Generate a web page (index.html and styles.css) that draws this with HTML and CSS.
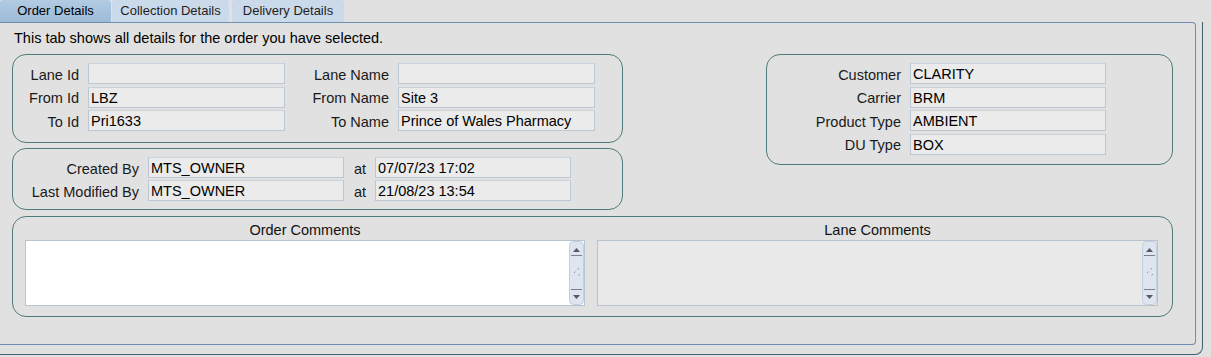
FILE: index.html
```html
<!DOCTYPE html>
<html lang="en">
<head>
	<meta charset="UTF-8">
	<title>Order Details</title>
	<link rel="stylesheet" href="styles.css">
</head>
<body>

	<div class="tabs">
		<div class="tab active">Order Details</div>
		<div class="tab">Collection Details</div>
		<div class="tab">Delivery Details</div>
	</div>

	<div class="frame">
		<div class="panel">
			<p class="intro">This tab shows all details for the order you have selected.</p>

			<div class="top-row">
				<div class="left-col">
					<div class="group lane-box">
						<label>Lane Id</label><div class="field"></div>
						<label>Lane Name</label><div class="field"></div>
						<label>From Id</label><div class="field">LBZ</div>
						<label>From Name</label><div class="field">Site 3</div>
						<label>To Id</label><div class="field">Pri1633</div>
						<label>To Name</label><div class="field">Prince of Wales Pharmacy</div>
					</div>

					<div class="group audit-box">
						<label>Created By</label><div class="field">MTS_OWNER</div>
						<label>at</label><div class="field">07/07/23 17:02</div>
						<label>Last Modified By</label><div class="field">MTS_OWNER</div>
						<label>at</label><div class="field">21/08/23 13:54</div>
					</div>
				</div>

				<div class="group info-box">
					<label>Customer</label><div class="field">CLARITY</div>
					<label>Carrier</label><div class="field">BRM</div>
					<label>Product Type</label><div class="field">AMBIENT</div>
					<label>DU Type</label><div class="field">BOX</div>
				</div>
			</div>

			<div class="group comments-box">
				<div class="comment">
					<div class="comment-title">Order Comments</div>
					<div class="memo editable">
						<div class="memo-text"></div>
						<svg class="scroll" width="15" height="64" viewBox="0 0 15 64">
							<rect x="0.5" y="0.5" width="14" height="63" rx="4" fill="#dde5ef" stroke="#c3cfdc"/>
							<path d="M4 11 L7.5 7 L11 11 Z" fill="#555a66"/>
							<line x1="2" y1="14.5" x2="13" y2="14.5" stroke="#7a808c"/>
							<line x1="2" y1="48.5" x2="13" y2="48.5" stroke="#7a808c"/>
							<path d="M4 54 L7.5 58 L11 54 Z" fill="#555a66"/>
							<rect x="9" y="27" width="1" height="1" fill="#8a93a3"/>
							<rect x="8" y="28" width="1" height="1" fill="#b8c0cc"/>
							<rect x="6" y="30" width="1" height="1" fill="#b8c0cc"/>
							<rect x="5" y="31" width="1" height="1" fill="#8a93a3"/>
							<rect x="10" y="33" width="1" height="1" fill="#8a93a3"/>
							<rect x="9" y="34" width="1" height="1" fill="#b8c0cc"/>
						</svg>
					</div>
				</div>
				<div class="comment">
					<div class="comment-title">Lane Comments</div>
					<div class="memo readonly">
						<div class="memo-text"></div>
						<svg class="scroll" width="15" height="64" viewBox="0 0 15 64">
							<rect x="0.5" y="0.5" width="14" height="63" rx="4" fill="#dde5ef" stroke="#c3cfdc"/>
							<path d="M4 11 L7.5 7 L11 11 Z" fill="#555a66"/>
							<line x1="2" y1="14.5" x2="13" y2="14.5" stroke="#7a808c"/>
							<line x1="2" y1="48.5" x2="13" y2="48.5" stroke="#7a808c"/>
							<path d="M4 54 L7.5 58 L11 54 Z" fill="#555a66"/>
							<rect x="9" y="27" width="1" height="1" fill="#8a93a3"/>
							<rect x="8" y="28" width="1" height="1" fill="#b8c0cc"/>
							<rect x="6" y="30" width="1" height="1" fill="#b8c0cc"/>
							<rect x="5" y="31" width="1" height="1" fill="#8a93a3"/>
							<rect x="10" y="33" width="1" height="1" fill="#8a93a3"/>
							<rect x="9" y="34" width="1" height="1" fill="#b8c0cc"/>
						</svg>
					</div>
				</div>
			</div>
		</div>
	</div>

</body>
</html>
```

FILE: styles.css
```css
body {
	font-family: "Liberation Sans", Arial, sans-serif;
	font-size: 14.5px;
	color: #111;
	margin: 0;
	padding: 0;
	background-color: #e1e1e1;
}

/* tab strip */
.tabs {
	display: flex;
	height: 22px;
	gap: 1px;
}
.tab {
	box-sizing: border-box;
	height: 22px;
	padding: 3px 0 0 0;
	font-size: 13px;
	line-height: 16px;
	text-align: center;
	color: #1e1e1e;
	background-color: #cbdaeb;
	border-top-right-radius: 3px;
	border-top-left-radius: 3px;
}
.tab:nth-child(1) { width: 111px; }
.tab:nth-child(2) { width: 117px; }
.tab:nth-child(3) { width: 112px; margin-left: 2px; }
.tab.active {
	background: linear-gradient(#b2cbe3, #9dbad7);
	color: #000;
}

/* outer frame + panel */
.frame {
	width: 1203px;
	box-sizing: border-box;
	padding: 0 6px 9px 0;
	border-right: 1px solid #3f6070;
	border-bottom: 1px solid #3f6070;
	border-bottom-right-radius: 8px;
}
.panel {
	box-sizing: border-box;
	height: 323px;
	border-top: 1px solid #6f8db0;
	border-right: 1px solid #6f8db0;
	border-bottom: 1px solid #6f8db0;
	border-top-right-radius: 4px;
	border-bottom-right-radius: 4px;
	padding: 7px 0 0 12px;
}
.intro {
	margin: 0 0 8px 2px;
	line-height: 16px;
	color: #000;
}

.top-row {
	display: grid;
	grid-template-columns: 611px 407px;
	column-gap: 143px;
	align-items: start;
}
.left-col {
	display: flex;
	flex-direction: column;
	gap: 5px;
}

/* rounded group boxes */
.group {
	box-sizing: border-box;
	border: 1px solid #4f7c7a;
	border-radius: 14px;
	display: grid;
	align-items: center;
	column-gap: 9px;
	row-gap: 2px;
}
.group label {
	text-align: right;
	line-height: 16px;
	padding-top: 2px;
	white-space: nowrap;
	color: #1a1a1a;
}
.field {
	box-sizing: border-box;
	height: 21px;
	border: 1px solid #bac8d6;
	border-top-color: #c9d3de;
	background-color: #ebebeb;
	padding: 1px 2px 0 2px;
	line-height: 18px;
	color: #000;
	white-space: nowrap;
	overflow: hidden;
}

.lane-box {
	height: 89px;
	grid-template-columns: 66px 197px 95px 197px;
	padding: 8px 0 0 0;
	align-content: start;
	row-gap: 2.5px;
}
.audit-box {
	height: 62px;
	grid-template-columns: 126px 196px 13px 196px;
	padding: 8px 0 0 0;
	align-content: start;
}
.info-box {
	height: 111px;
	grid-template-columns: 134px 196px;
	padding: 8px 0 0 0;
	align-content: start;
	row-gap: 2.5px;
}

/* comments */
.comments-box {
	width: 1161px;
	height: 101px;
	margin-top: 6px;
	display: flex;
	gap: 12px;
	padding: 5px 0 0 12px;
	align-items: flex-start;
}
.comment {
	display: flex;
	flex-direction: column;
	gap: 2px;
}
.comment:nth-child(1) { width: 560px; }
.comment:nth-child(2) { width: 561px; }
.comment-title {
	text-align: center;
	line-height: 16px;
	color: #111;
}
.memo {
	box-sizing: border-box;
	height: 66px;
	border: 1px solid #b6c4d2;
	display: flex;
	justify-content: space-between;
}
.memo.editable { background-color: #fff; }
.memo.readonly { background-color: #e9e9e9; }
.scroll {
	display: block;
}
```
